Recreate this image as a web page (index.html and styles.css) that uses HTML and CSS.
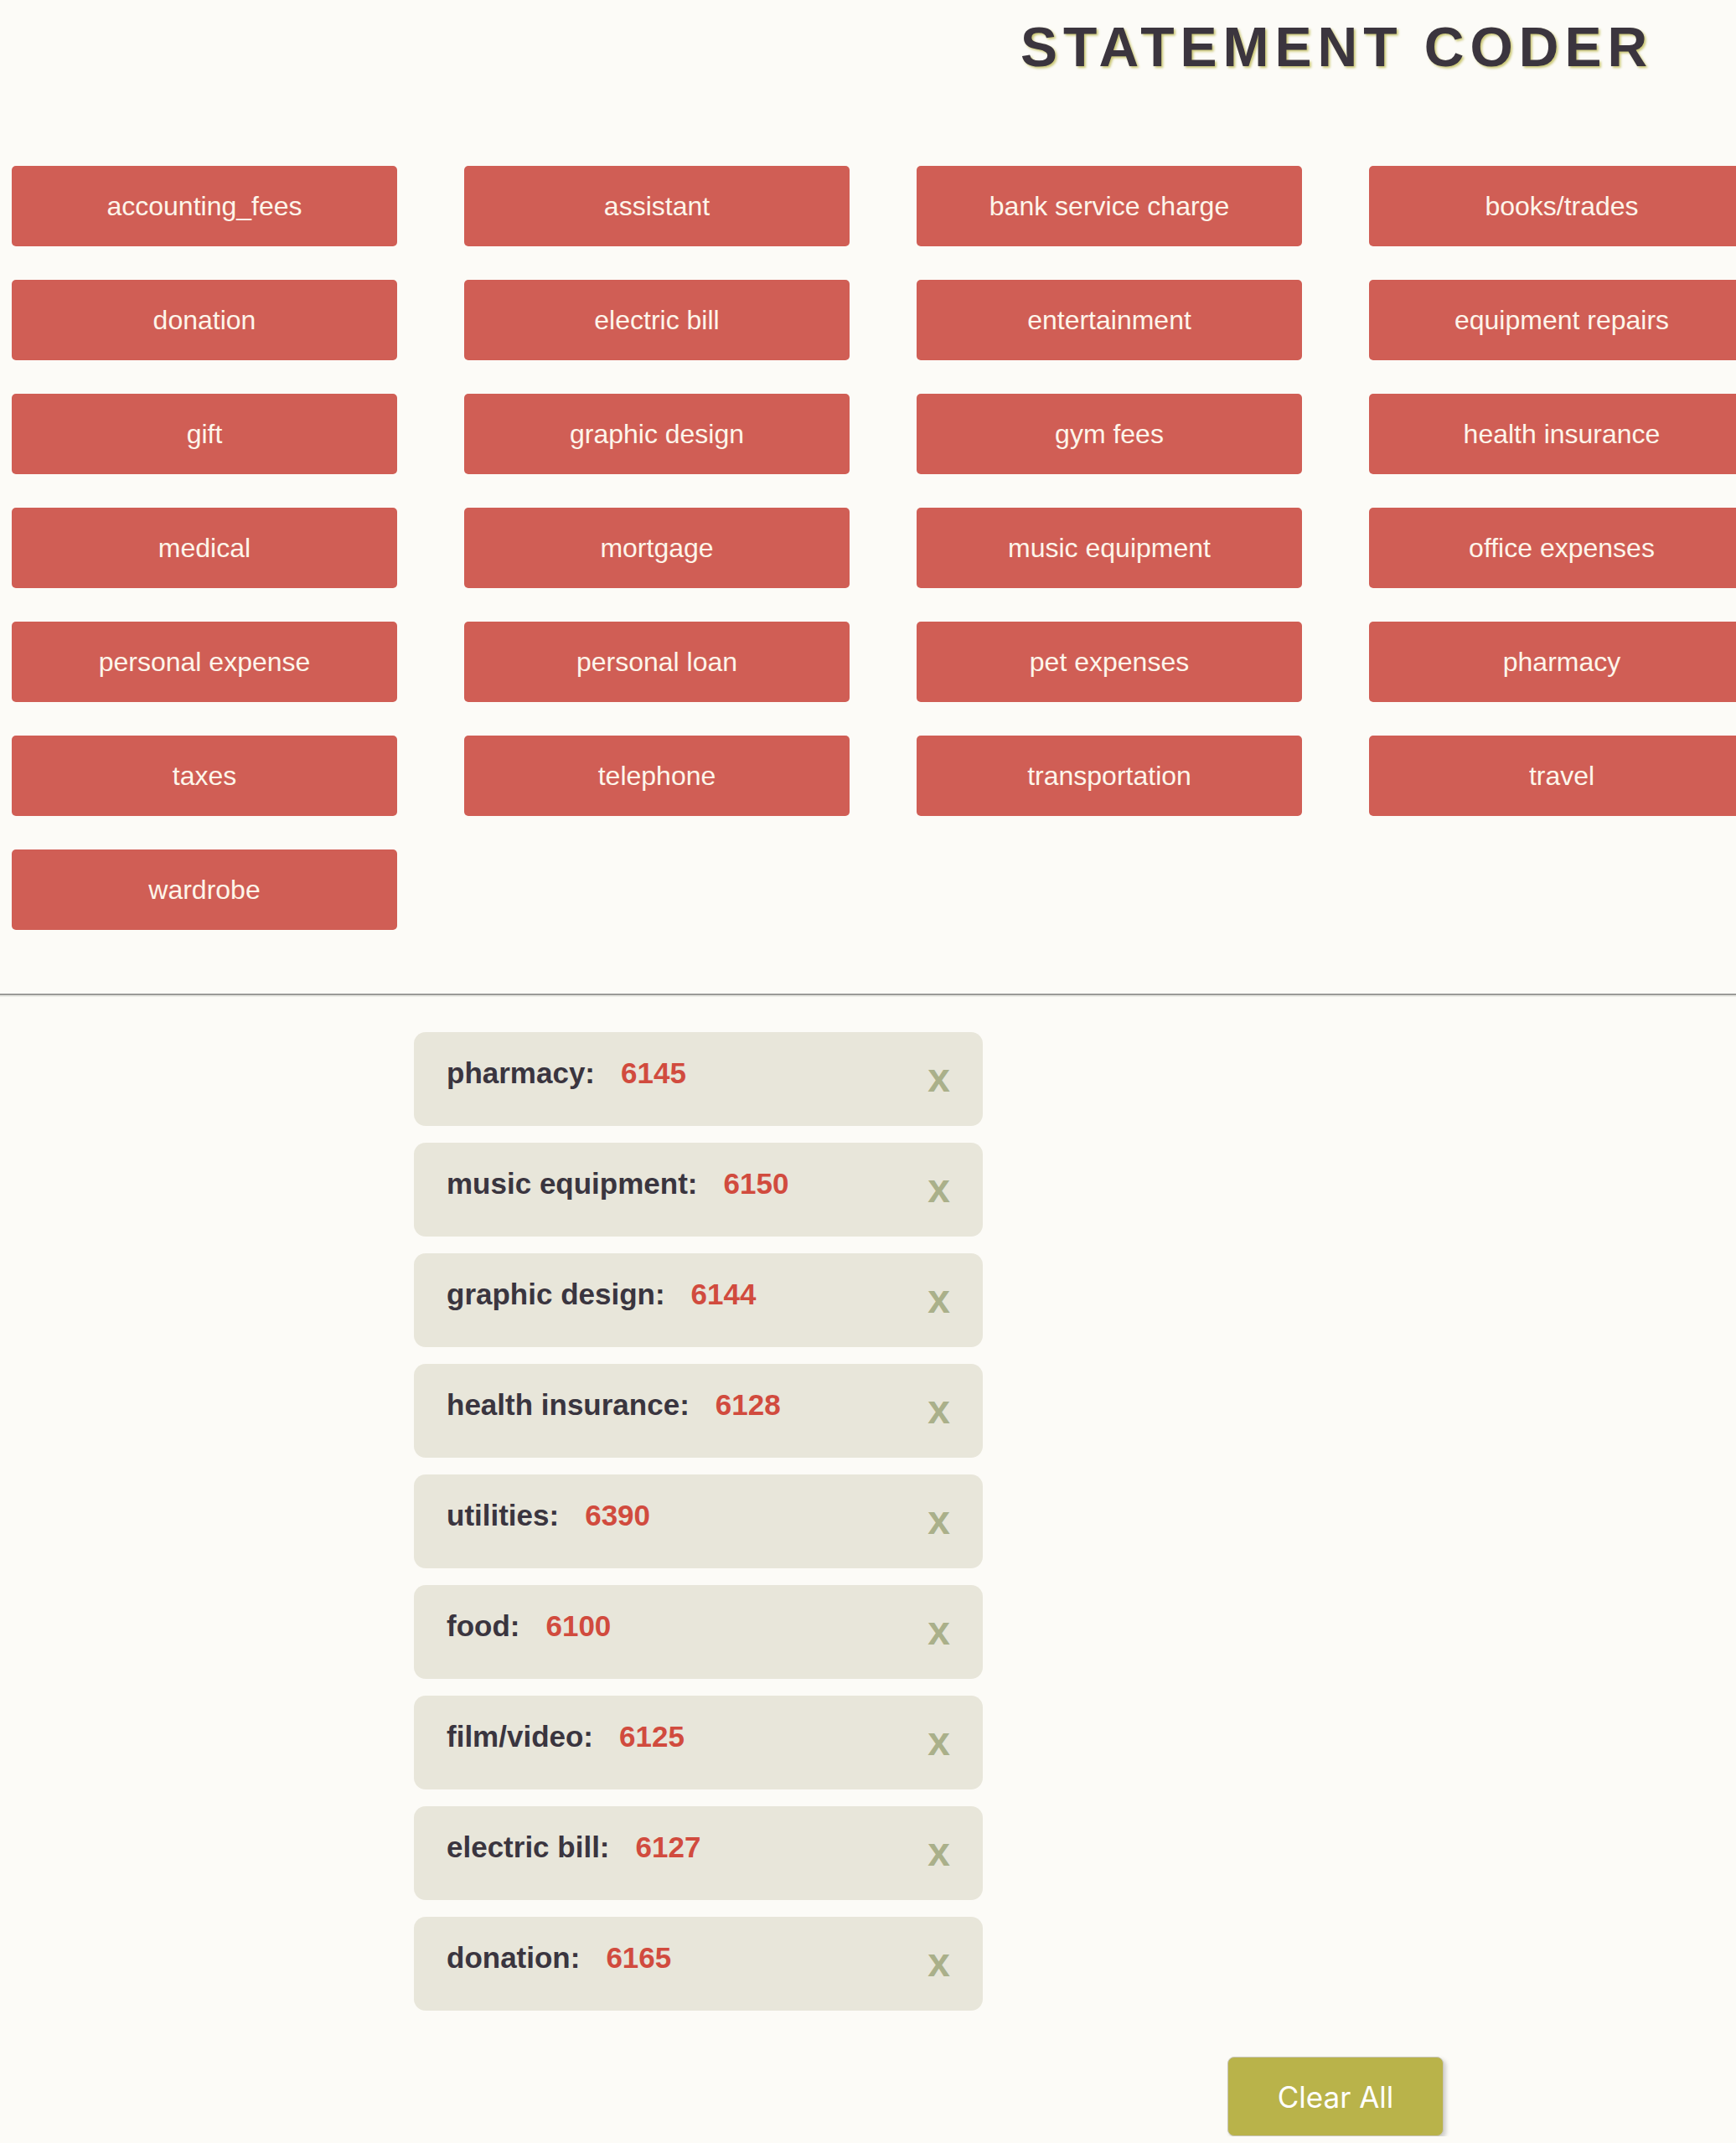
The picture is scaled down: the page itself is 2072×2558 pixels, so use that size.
FILE: index.html
```html
<!DOCTYPE html>
<html lang="en">
<head>
<meta charset="utf-8">
<title>Statement Coder</title>
<link rel="stylesheet" href="styles.css">
</head>
<body>
<header class="header">
  <h1 class="title">STATEMENT CODER</h1>
</header>
<section class="categories">
  <button class="cat">accounting_fees</button>
  <button class="cat">assistant</button>
  <button class="cat">bank service charge</button>
  <button class="cat">books/trades</button>
  <button class="cat">donation</button>
  <button class="cat">electric bill</button>
  <button class="cat">entertainment</button>
  <button class="cat">equipment repairs</button>
  <button class="cat">gift</button>
  <button class="cat">graphic design</button>
  <button class="cat">gym fees</button>
  <button class="cat">health insurance</button>
  <button class="cat">medical</button>
  <button class="cat">mortgage</button>
  <button class="cat">music equipment</button>
  <button class="cat">office expenses</button>
  <button class="cat">personal expense</button>
  <button class="cat">personal loan</button>
  <button class="cat">pet expenses</button>
  <button class="cat">pharmacy</button>
  <button class="cat">taxes</button>
  <button class="cat">telephone</button>
  <button class="cat">transportation</button>
  <button class="cat">travel</button>
  <button class="cat">wardrobe</button>
</section>
<hr class="divider">
<ul class="coded">
  <li class="item"><span class="label">pharmacy:<span class="code">6145</span></span><span class="remove">x</span></li>
  <li class="item"><span class="label">music equipment:<span class="code">6150</span></span><span class="remove">x</span></li>
  <li class="item"><span class="label">graphic design:<span class="code">6144</span></span><span class="remove">x</span></li>
  <li class="item"><span class="label">health insurance:<span class="code">6128</span></span><span class="remove">x</span></li>
  <li class="item"><span class="label">utilities:<span class="code">6390</span></span><span class="remove">x</span></li>
  <li class="item"><span class="label">food:<span class="code">6100</span></span><span class="remove">x</span></li>
  <li class="item"><span class="label">film/video:<span class="code">6125</span></span><span class="remove">x</span></li>
  <li class="item"><span class="label">electric bill:<span class="code">6127</span></span><span class="remove">x</span></li>
  <li class="item"><span class="label">donation:<span class="code">6165</span></span><span class="remove">x</span></li>
</ul>
<div class="actions">
  <button class="clear">Clear All</button>
</div>
</body>
</html>
```
FILE: styles.css
```css
html, body {
  margin: 0;
  padding: 0;
  background: #fcfbf7;
}
body {
  font-family: "Liberation Sans", Arial, sans-serif;
  color: #3a353f;
}
.header {
  padding: 23px 0 0 1218px;
}
.title {
  margin: 0;
  font-family: "Liberation Sans", Arial, sans-serif;
  font-weight: bold;
  font-size: 66px;
  line-height: 66px;
  letter-spacing: 7px;
  color: #3b353e;
  text-shadow: 2px 2px 3px #c9c672;
  white-space: nowrap;
}
.categories {
  display: grid;
  grid-template-columns: repeat(4, 460px);
  column-gap: 80px;
  row-gap: 40px;
  padding-left: 14px;
  margin-top: 109px;
}
.cat {
  height: 96px;
  border: none;
  border-radius: 5px;
  background: #d05e55;
  color: #fdf5ea;
  font-family: "Liberation Sans", Arial, sans-serif;
  font-size: 32px;
  padding: 0;
  display: flex;
  align-items: center;
  justify-content: center;
}
.divider {
  margin: 76px 0 0 0;
  border: none;
  border-top: 2px solid #9a9a98;
  border-bottom: 2px solid #ebebe6;
  height: 0;
}
.coded {
  list-style: none;
  margin: 42px 0 0 494px;
  padding: 0;
  width: 679px;
}
.item {
  box-sizing: border-box;
  height: 112px;
  margin-bottom: 20px;
  padding: 0 39px 0 39px;
  background: #e8e6da;
  border-radius: 14px;
  display: flex;
  justify-content: space-between;
  align-items: flex-start;
}
.label {
  margin-top: 29px;
  font-size: 35px;
  line-height: 40px;
  font-weight: bold;
  color: #3a353f;
}
.code {
  margin-left: 31px;
  color: #d14b3e;
}
.remove {
  margin-top: 31px;
  font-size: 48px;
  line-height: 48px;
  font-weight: bold;
  color: #aab08a;
}
.actions {
  padding: 35px 0 0 1465px;
}
.clear {
  width: 258px;
  height: 95px;
  background: #b9b34a;
  border: 1px solid #c9c6b8;
  border-radius: 8px;
  box-shadow: 3px 3px 5px rgba(0, 0, 0, 0.18);
  color: #ffffff;
  font-family: Inter, "Liberation Sans", sans-serif;
  font-size: 35px;
  padding: 0;
}
```
